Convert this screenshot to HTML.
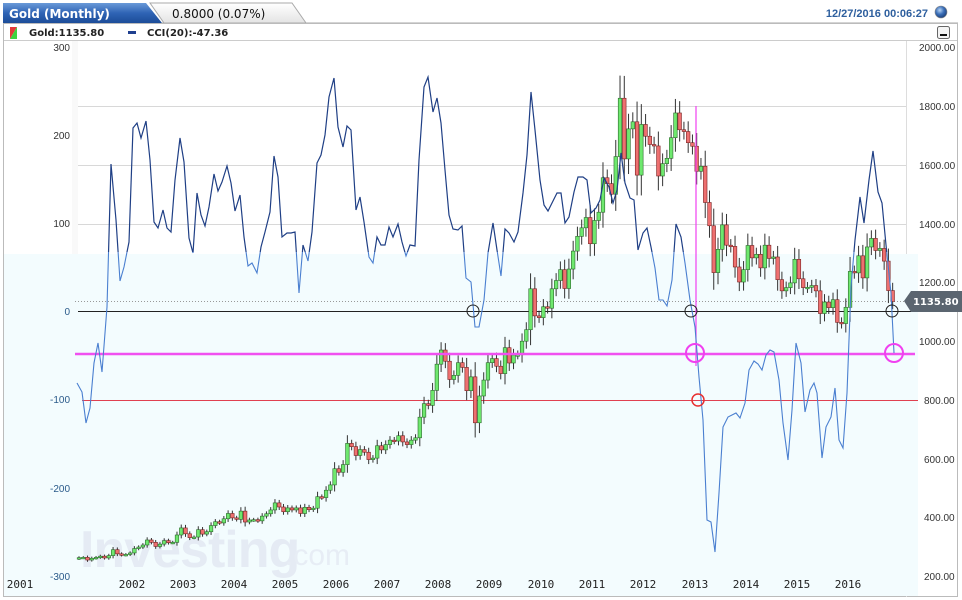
<!DOCTYPE html>
<html><head><meta charset="utf-8">
<style>
html,body{margin:0;padding:0;background:#fff;width:962px;height:600px;overflow:hidden;font-family:"Liberation Sans",sans-serif}
</style></head><body>
<svg id="s" width="962" height="600" xmlns="http://www.w3.org/2000/svg" style="position:absolute;left:0;top:0">
<defs>
<linearGradient id="tb" x1="0" y1="0" x2="0" y2="1"><stop offset="0" stop-color="#6a9ad8"/><stop offset="0.5" stop-color="#2f64b5"/><stop offset="1" stop-color="#1c4c98"/></linearGradient>
<linearGradient id="tg" x1="0" y1="0" x2="0" y2="1"><stop offset="0" stop-color="#ffffff"/><stop offset="1" stop-color="#e4e4e4"/></linearGradient>
<radialGradient id="sp" cx="0.4" cy="0.35" r="0.7"><stop offset="0" stop-color="#b8d4f4"/><stop offset="0.5" stop-color="#3b6fb8"/><stop offset="1" stop-color="#1a3c74"/></radialGradient>
<clipPath id="top"><rect x="0" y="0" width="962" height="252"/></clipPath>
<clipPath id="bot"><rect x="0" y="252" width="962" height="348"/></clipPath>
</defs>
<path d="M150 3 L292 3 L306 23 L164 23 Z" fill="url(#tg)" stroke="#aaa"/>
<path d="M3 3 L146 3 L162 23 L3 23 Z" fill="url(#tb)"/>
<line x1="162" y1="23" x2="958" y2="23" stroke="#aaa"/>
<text x="9" y="18" font-family="DejaVu Sans,sans-serif" font-weight="bold" font-size="12" fill="#fff">Gold (Monthly)</text>
<text x="172" y="18" font-family="DejaVu Sans,sans-serif" font-size="12" fill="#111">0.8000 (0.07%)</text>
<text x="928" y="17" text-anchor="end" font-family="Liberation Sans,sans-serif" font-weight="bold" font-size="11" fill="#2e5f9e">12/27/2016 00:06:27</text>
<circle cx="941" cy="12" r="6" fill="url(#sp)" stroke="#888" stroke-width="0.6"/>
<rect x="3.5" y="23.5" width="954" height="573" fill="#fff" stroke="#bbb"/>
<line x1="4" y1="40.5" x2="957" y2="40.5" stroke="#ccc"/>
<path d="M10 27 L17 27 L10 39 Z" fill="#e23a3a"/><path d="M17 27 L17 39 L10 39 Z" fill="#3ed23e"/>
<text x="29" y="36" font-family="DejaVu Sans,sans-serif" font-weight="bold" font-size="10" fill="#222">Gold:1135.80</text>
<rect x="128" y="31" width="8" height="3" fill="#1f3f8f"/>
<text x="147" y="36" font-family="DejaVu Sans,sans-serif" font-weight="bold" font-size="10" fill="#222">CCI(20):-47.36</text>
<rect x="937.5" y="26.5" width="12" height="12" rx="2" fill="#f4f4f4" stroke="#666"/>
<rect x="940" y="34" width="7" height="2" fill="#111"/>
<line x1="906.5" y1="41" x2="906.5" y2="597" stroke="#ddd"/>
<rect x="4" y="254" width="914" height="342" fill="#f3fcfe"/>
<rect x="72" y="41" width="6" height="213" fill="#f9f9f9"/>
<text x="80" y="567" font-family="Liberation Sans,sans-serif" font-weight="bold" font-size="52" fill="#e5ebf4" letter-spacing="-1">Investing</text>
<text x="285" y="565" font-family="Liberation Sans,sans-serif" font-size="30" fill="#e7edf5">.com</text>
<g stroke="#d8d8d8"><line x1="78" y1="106.5" x2="906" y2="106.5"/><line x1="78" y1="165.5" x2="906" y2="165.5"/><line x1="78" y1="224.5" x2="906" y2="224.5"/></g>
<line x1="75" y1="301.5" x2="906" y2="301.5" stroke="#999" stroke-dasharray="1,2"/>
<line x1="78" y1="311.5" x2="918" y2="311.5" stroke="#222"/>
<line x1="82" y1="400.5" x2="918" y2="400.5" stroke="#e04050"/>
<g id="candles"></g>
<line x1="696" y1="106" x2="696" y2="366" stroke="#f040f0" stroke-width="1.2"/>
<line x1="75" y1="354" x2="915" y2="354" stroke="#f050f0" stroke-width="2.5"/>
<g id="cci"></g>
<g fill="none">
<circle cx="473" cy="311" r="6" stroke="#222"/><circle cx="691" cy="311" r="6" stroke="#222"/><circle cx="892" cy="311" r="6" stroke="#222"/>
<circle cx="695" cy="353" r="9" stroke="#f040f0" stroke-width="2"/><circle cx="894" cy="353" r="9" stroke="#f040f0" stroke-width="2"/>
<circle cx="698" cy="400" r="6" stroke="#e83030" stroke-width="1.5"/>
</g>
<g font-family="Liberation Sans,sans-serif" font-size="10" text-anchor="end">
<text x="70" y="51" fill="#333">300</text><text x="70" y="139" fill="#333">200</text><text x="70" y="227" fill="#333">100</text>
<text x="70" y="315" fill="#2a5a8a">0</text><text x="70" y="403" fill="#2a5a8a">-100</text><text x="70" y="492" fill="#2a5a8a">-200</text><text x="70" y="580" fill="#2a5a8a">-300</text>
</g>
<g font-family="Liberation Sans,sans-serif" font-size="10" fill="#333">
<text x="919" y="51">2000.00</text><text x="919" y="110">1800.00</text><text x="919" y="169">1600.00</text><text x="919" y="228">1400.00</text><text x="919" y="286">1200.00</text><text x="919" y="345">1000.00</text><text x="924" y="404">800.00</text><text x="924" y="463">600.00</text><text x="924" y="521">400.00</text><text x="924" y="580">200.00</text>
</g>
<path d="M904 301 L911 291 L962 291 L962 312 L911 312 Z" fill="#5b6570"/>
<text x="913" y="305" font-family="DejaVu Sans,sans-serif" font-weight="bold" font-size="10" fill="#fff">1135.80</text>
<g font-family="DejaVu Sans Mono,monospace" font-size="11" fill="#222" text-anchor="middle">
<text x="20" y="588">2001</text><text x="132" y="588">2002</text><text x="183" y="588">2003</text><text x="234" y="588">2004</text><text x="285" y="588">2005</text><text x="336" y="588">2006</text><text x="387" y="588">2007</text><text x="438" y="588">2008</text><text x="489" y="588">2009</text><text x="541" y="588">2010</text><text x="592" y="588">2011</text><text x="643" y="588">2012</text><text x="695" y="588">2013</text><text x="746" y="588">2014</text><text x="797" y="588">2015</text><text x="848" y="588">2016</text>
</g>
</svg>
<script>
var c=[266,267,258,264,267,271,265,273,293,279,275,277,282,297,302,309,326,318,304,312,324,317,318,343,367,347,334,336,361,346,354,375,388,384,398,416,401,396,424,387,394,395,391,407,415,428,452,438,422,435,428,435,416,437,429,434,473,470,495,513,568,556,582,654,643,613,633,624,599,604,646,632,650,665,662,680,659,650,665,673,743,789,783,834,923,971,933,871,885,928,912,833,880,724,815,869,928,942,916,891,979,927,954,955,1001,1040,1179,1087,1081,1118,1113,1179,1207,1244,1180,1246,1307,1357,1386,1421,1332,1411,1439,1556,1536,1500,1628,1826,1620,1722,1746,1565,1737,1697,1669,1664,1562,1604,1622,1692,1776,1719,1713,1675,1663,1578,1595,1472,1393,1234,1313,1396,1327,1323,1253,1202,1244,1326,1284,1296,1250,1327,1282,1287,1210,1172,1183,1199,1279,1213,1183,1184,1190,1172,1095,1134,1115,1142,1065,1061,1116,1238,1233,1291,1216,1321,1350,1309,1316,1273,1173,1136];
function py(p){return 47+(2000-p)*0.2945;}
var g=document.getElementById("candles"),h="";
for(var i=0;i<c.length;i++){var o=i?c[i-1]:c[0]-3,cl=c[i];var x=79+i*4.26;var hi=Math.max(o,cl)+Math.abs(cl-o)*0.25+c[i]*0.015,lo=Math.min(o,cl)-Math.abs(cl-o)*0.25-c[i]*0.015;
var up=cl>=o;h+='<line x1="'+x+'" y1="'+py(hi)+'" x2="'+x+'" y2="'+py(lo)+'" stroke="#333" stroke-width="1"/>';
var t=py(Math.max(o,cl)),b=py(Math.min(o,cl));if(b-t<1.5)b=t+1.5;
h+='<rect x="'+(x-1.8)+'" y="'+t+'" width="3.6" height="'+(b-t)+'" fill="'+(up?"#6ee86e":"#ee7070")+'" stroke="'+(up?"#2c6a2c":"#7a2222")+'" stroke-width="0.6"/>';}
g.innerHTML=h;
var pts="77,383 82,392 86,423 90,408 94,363 98,343 102,372 107,307 111,164 116,220 120,281 124,267 129,242 133,128 137,123 141,138 146,121 150,160 154,222 158,228 163,210 167,228 171,232 175,180 180,138 184,162 189,238 193,253 197,193 201,215 205,226 209,207 214,174 218,191 222,182 227,166 231,183 235,211 240,195 244,237 248,266 252,263 257,273 261,247 265,232 270,212 274,156 278,177 282,237 287,233 291,233 295,232 299,293 303,245 308,261 312,232 317,163 321,155 325,135 329,97 334,78 338,127 343,147 347,126 351,130 356,210 360,197 364,222 369,257 373,263 377,237 381,245 385,245 389,227 393,237 398,224 402,242 406,256 410,245 415,246 419,160 424,87 428,77 433,112 437,98 441,123 445,170 449,215 453,229 458,230 462,226 466,278 471,282 475,327 479,327 484,300 488,253 493,223 497,250 501,276 505,229 509,233 514,242 518,232 523,193 527,155 531,92 535,130 540,180 544,205 548,211 552,203 557,193 561,193 565,223 569,217 574,192 578,177 583,177 587,180 591,213 596,208 600,200 604,178 609,187 613,203 617,190 621,153 625,183 630,198 634,200 638,250 643,233 647,228 651,247 655,268 659,300 663,300 667,306 672,280 676,224 681,237 685,263 690,300 695,327 699,377 703,420 707,520 711,522 715,552 719,493 723,427 728,417 736,413 740,418 745,403 749,370 754,361 758,364 762,370 766,355 770,350 774,352 779,380 783,423 788,460 792,410 796,343 801,363 805,412 810,390 814,383 817,393 822,458 826,427 831,417 835,388 839,440 843,448 847,393 851,287 855,240 860,197 864,223 869,180 873,151 878,192 882,203 886,245 891,293 894,353";
document.getElementById("cci").innerHTML='<polyline points="'+pts+'" fill="none" stroke="#1f3f85" stroke-width="1.2" clip-path="url(#top)"/><polyline points="'+pts+'" fill="none" stroke="#4a7fd0" stroke-width="1.1" clip-path="url(#bot)"/>';
</script>
</body></html>
